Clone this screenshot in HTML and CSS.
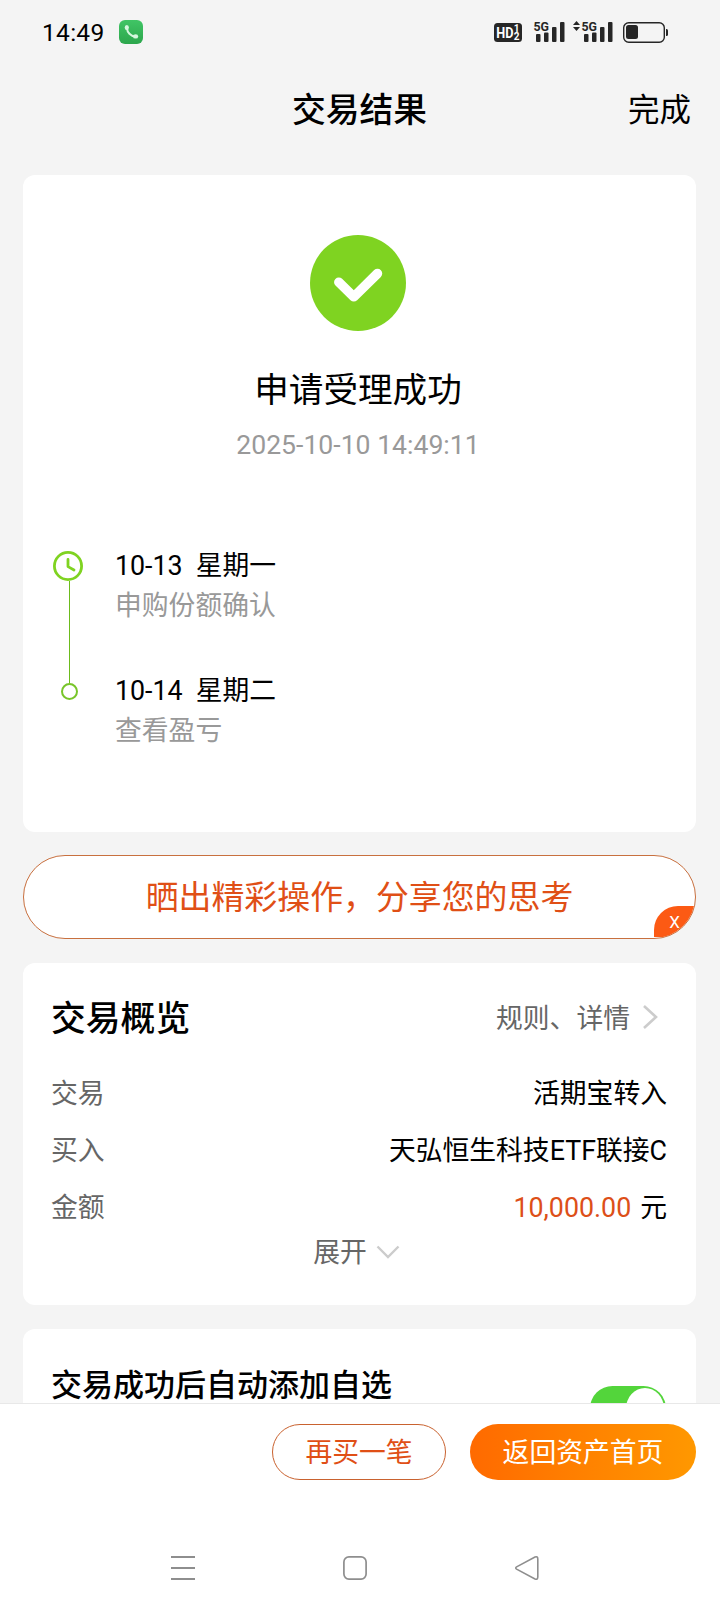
FILE: index.html
```html
<!DOCTYPE html>
<html lang="zh-CN">
<head>
  <meta charset="UTF-8" />
  <meta name="viewport" content="width=device-width, initial-scale=1.0"/>
  <title>交易结果</title>
  <link rel="stylesheet" href="styles.css">
</head>
<body>
  <div class="screen">
    <div class="status-bar">
      <span class="time">14:49</span>
      <svg class="phone-icon" width="24" height="24" viewBox="0 0 24 24">
        <defs>
          <linearGradient id="phone-bg" x1="0" y1="0" x2="0" y2="1">
            <stop offset="0" stop-color="#40c565"/>
            <stop offset="1" stop-color="#2ca64c"/>
          </linearGradient>
        </defs>
        <rect width="24" height="24" rx="6" fill="url(#phone-bg)"/>
        <path d="M8 8.5C8.3 12.5 11.5 16 16 16.5" fill="none" stroke="#d5f7de" stroke-width="2"/>
        <ellipse cx="7.8" cy="7.6" rx="2.1" ry="2.5" fill="#d5f7de"/>
        <ellipse cx="16.6" cy="16.4" rx="2.6" ry="2.2" fill="#d5f7de"/>
      </svg>
      <svg class="status-icons" width="176" height="40" viewBox="0 -8 176 40">
        <g fill="#262626">
          <rect x="0" y="3" width="28" height="19" rx="3.5"/>
          <rect x="42" y="14" width="4.5" height="8" rx="1"/>
          <rect x="50" y="12.5" width="4.5" height="9.5" rx="1"/>
          <rect x="58" y="7" width="4.5" height="15" rx="1"/>
          <rect x="66" y="2" width="4.5" height="20" rx="1"/>
          <rect x="90" y="14" width="4.5" height="8" rx="1"/>
          <rect x="98" y="12.5" width="4.5" height="9.5" rx="1"/>
          <rect x="106" y="7" width="4.5" height="15" rx="1"/>
          <rect x="114" y="2" width="4.5" height="20" rx="1"/>
          <path d="M79 5l3.5-4 3.5 4zM79 7l3.5 4 3.5-4z"/>
          <rect x="132" y="5" width="12" height="14" rx="2.5"/>
          <path d="M172 9h.5a1.5 1.5 0 0 1 1.5 1.5v4a1.5 1.5 0 0 1-1.5 1.5h-.5z"/>
        </g>
        <rect x="129.7" y="2.7" width="40.6" height="19.6" rx="5" fill="none" stroke="#262626" stroke-width="1.4"/>
        <text class="net" x="39.5" y="11" textLength="15.5" lengthAdjust="spacingAndGlyphs">5G</text>
        <text class="net" x="87.5" y="11" textLength="15.5" lengthAdjust="spacingAndGlyphs">5G</text>
        <text class="hd" x="2.2" y="18" textLength="17.2" lengthAdjust="spacingAndGlyphs">HD</text>
        <text class="hd-num" x="19.8" y="12.2">1</text>
        <text class="hd-num" x="19.8" y="20.4">2</text>
      </svg>
    </div>

    <header class="header">
      <h1>交易结果</h1>
      <span class="done">完成</span>
    </header>

    <main class="content">
      <section class="card result">
        <svg class="check" width="96" height="96" viewBox="0 0 96 96">
          <circle cx="48" cy="48" r="48" fill="#7fd321"/>
          <path d="M28.8 47.2L43.8 61.8 67.5 38.5" fill="none" stroke="#fff" stroke-width="9.5" stroke-linecap="round" stroke-linejoin="round"/>
        </svg>
        <h2 class="result-title">申请受理成功</h2>
        <p class="result-time">2025-10-10 14:49:11</p>

        <div class="timeline">
          <div class="rail">
            <svg class="clock" width="30" height="30" viewBox="0 0 30 30">
              <circle cx="15" cy="15" r="13.6" fill="none" stroke="#7fd321" stroke-width="2.8"/>
              <path d="M15 8.5v7.1l6 3.4" fill="none" stroke="#7fd321" stroke-width="2.8" stroke-linecap="round" stroke-linejoin="round"/>
            </svg>
            <span class="rail-line"></span>
            <span class="rail-dot"></span>
          </div>
          <div class="steps">
            <div class="step">
              <p><span class="step-date">10-13</span>星期一</p>
              <p class="gray">申购份额确认</p>
            </div>
            <div class="step">
              <p><span class="step-date">10-14</span>星期二</p>
              <p class="gray">查看盈亏</p>
            </div>
          </div>
        </div>
      </section>

      <div class="share">
        <span class="share-text">晒出精彩操作，分享您的思考</span>
        <span class="share-close">X</span>
      </div>

      <section class="card overview">
        <div class="overview-head">
          <h2>交易概览</h2>
          <span class="rules">规则、详情</span>
          <svg width="16" height="26" viewBox="0 0 16 26">
            <path d="M2 2l12 11L2 24" fill="none" stroke="#ccc" stroke-width="2.6"/>
          </svg>
        </div>
        <div class="row"><span class="label">交易</span><span>活期宝转入</span></div>
        <div class="row"><span class="label">买入</span><span>天弘恒生科技ETF联接C</span></div>
        <div class="row"><span class="label">金额</span><span><span class="money">10,000.00</span>元</span></div>
        <div class="expand">
          <span>展开</span>
          <svg width="24" height="14" viewBox="0 0 24 14">
            <path d="M1.5 1.5L12 12 22.5 1.5" fill="none" stroke="#ccc" stroke-width="2.4"/>
          </svg>
        </div>
      </section>

      <section class="card auto-add">
        <span class="auto-title">交易成功后自动添加自选</span>
        <span class="switch"><span class="knob"></span></span>
      </section>
    </main>

    <footer class="actions">
      <span class="btn btn-outline">再买一笔</span>
      <span class="btn btn-primary">返回资产首页</span>
    </footer>

    <nav class="nav-bar">
      <svg width="26" height="26" viewBox="0 0 26 26">
        <path d="M1 2h24M1 13h24M1 24h24" stroke="#8e8e8e" stroke-width="2"/>
      </svg>
      <svg width="26" height="26" viewBox="0 0 26 26">
        <rect x="1.9" y="1.9" width="22.2" height="22.2" rx="5" fill="none" stroke="#8e8e8e" stroke-width="1.7"/>
      </svg>
      <svg width="26" height="26" viewBox="0 0 26 26">
        <path d="M2.6 11.9L21 2.1Q23.8 1 23.8 4V22Q23.8 25 21 23.9L2.6 14.1Q.9 13 2.6 11.9Z" fill="none" stroke="#8e8e8e" stroke-width="1.6"/>
      </svg>
    </nav>
  </div>
</body>
</html>
```
FILE: styles.css
```css
* {
  box-sizing: border-box;
}

body {
  margin: 0;
  background: #f4f4f4;
  font-family: Roboto, "Noto Sans CJK SC", sans-serif;
  font-size: 26.8px;
  color: #000;
}

h1, h2, p {
  margin: 0;
}

svg {
  display: block;
  flex: none;
}

.screen {
  width: 720px;
  height: 1612px;
  display: flex;
  flex-direction: column;
  overflow: hidden;
}

/* status bar */
.status-bar {
  display: flex;
  align-items: center;
  height: 64px;
  padding: 0 50px 0 42px;
}

.time {
  width: 77px;
  padding-top: 1px;
  font-size: 24.5px;
  letter-spacing: 0.3px;
}

.status-icons {
  margin-left: auto;
}

.net {
  font: 700 13.5px Roboto, sans-serif;
  fill: #262626;
}

.hd {
  font: 700 15px Roboto, sans-serif;
  fill: #fff;
}

.hd-num {
  font: 700 10px Roboto, sans-serif;
  fill: #fff;
}

/* title bar */
.header {
  display: grid;
  grid-template-columns: 1fr auto 1fr;
  align-items: center;
  height: 92px;
  padding: 0 29px 5px 28px;
}

.header h1 {
  grid-column: 2;
  font-size: 33.8px;
  font-weight: 500;
}

.done {
  padding-bottom: 2px;
  font-size: 31.5px;
  text-align: right;
}

.content {
  flex: 1;
  min-height: 0;
  overflow: hidden;
  display: flex;
  flex-direction: column;
  padding: 19px 24px 0 23px;
}

.card {
  flex: none;
  background: #fff;
  border-radius: 12px;
}

/* result */
.result {
  height: 657px;
  margin-bottom: 23px;
  padding-top: 60px;
}

.check {
  margin-left: 287px;
}

.result-title {
  margin-top: 36px;
  padding-right: 3px;
  font-size: 34.6px;
  font-weight: 400;
  line-height: 46px;
  text-align: center;
}

.result-time {
  margin-top: 14px;
  padding-right: 3px;
  font-size: 26.6px;
  line-height: 36px;
  color: #999;
  text-align: center;
}

.timeline {
  display: flex;
  margin-top: 81px;
  padding-left: 30px;
}

.rail {
  display: flex;
  flex-direction: column;
  align-items: center;
  width: 33px;
  padding-top: 7px;
}

.clock {
  align-self: flex-start;
}

.rail-line {
  width: 1px;
  height: 102px;
  background: #6cbb1c;
}

.rail-dot {
  width: 17px;
  height: 17px;
  border: 2px solid #78c52a;
  border-radius: 50%;
}

.steps {
  margin-left: 29px;
  padding-top: 2px;
}

.step {
  height: 125px;
  line-height: 40px;
}

.step-date {
  margin-right: 13px;
}

.gray {
  color: #999;
}

/* share */
.share {
  flex: none;
  position: relative;
  display: flex;
  align-items: center;
  justify-content: center;
  height: 84px;
  margin-bottom: 24px;
  background: #fff;
  border: 1px solid #c8703f;
  border-radius: 42px;
  overflow: hidden;
  font-size: 32.9px;
  color: #e04f16;
}

.share-text {
  padding-bottom: 5px;
}

.share-close {
  position: absolute;
  right: 0;
  bottom: 1px;
  width: 41px;
  height: 31px;
  border-top-left-radius: 24px;
  background: #fc5a14;
  color: #fff;
  font-size: 17px;
  line-height: 33px;
  text-align: center;
}

/* overview */
.overview {
  height: 342px;
  margin-bottom: 24px;
  padding: 27px 29px 0 28px;
}

.overview-head {
  display: flex;
  align-items: center;
  height: 54px;
  margin-bottom: 22px;
  padding-right: 9px;
}

.overview-head h2 {
  padding-bottom: 2px;
  font-size: 34.8px;
  font-weight: 500;
}

.rules {
  margin-left: auto;
  margin-right: 12px;
  padding-bottom: 2px;
  color: #666;
}

.row {
  display: flex;
  justify-content: space-between;
  height: 57px;
  line-height: 57px;
}

.label {
  color: #666;
}

.money {
  margin-right: 9px;
  color: #dd4f18;
}

.expand {
  display: flex;
  align-items: center;
  justify-content: center;
  gap: 9px;
  height: 30px;
  margin-right: 5px;
  color: #666;
}

.expand span {
  padding-bottom: 3px;
}

/* auto add */
.auto-add {
  display: flex;
  justify-content: space-between;
  height: 160px;
  padding: 35px 30px 0 28px;
}

.auto-title {
  font-size: 31px;
  font-weight: 500;
  line-height: 44px;
}

.switch {
  display: flex;
  justify-content: flex-end;
  width: 76px;
  height: 45px;
  margin-top: 22px;
  padding: 2px;
  border-radius: 23px;
  background: #53d53b;
}

.knob {
  width: 38px;
  height: 41px;
  border-radius: 50%;
  background: #fff;
}

/* bottom buttons */
.actions {
  display: flex;
  justify-content: flex-end;
  gap: 24px;
  height: 121px;
  padding: 20px 24px 0;
  background: #fff;
  border-top: 1px solid #e8e8e8;
}

.btn {
  height: 56px;
  border-radius: 28px;
  line-height: 58px;
  text-align: center;
}

.btn-outline {
  width: 174px;
  border: 1px solid #c9622f;
  line-height: 56px;
  color: #e04f16;
}

.btn-primary {
  width: 226px;
  background: linear-gradient(to right, #ff6a00, #ff9800);
  color: #fff;
}

.nav-bar {
  display: flex;
  justify-content: center;
  gap: 146px;
  height: 88px;
  padding-top: 31px;
  padding-right: 10px;
  background: #fff;
}
```
